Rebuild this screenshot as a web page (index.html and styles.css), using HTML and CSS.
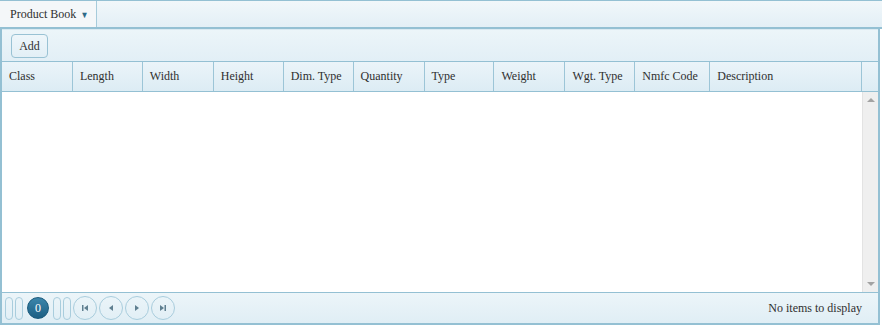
FILE: index.html
```html
<!DOCTYPE html>
<html lang="en">
<head>
    <meta charset="UTF-8">
    <title>Product Book</title>
    <link rel="stylesheet" href="styles.css">
</head>
<body>
    <div class="tabstrip">
        <div class="tab">Product Book <span class="caret">&#9660;</span></div>
    </div>
    <div class="grid">
        <div class="toolbar">
            <button class="add-btn">Add</button>
        </div>
        <div class="grid-header">
            <div class="col" style="width:71px">Class</div>
            <div class="col" style="width:70px">Length</div>
            <div class="col" style="width:71px">Width</div>
            <div class="col" style="width:70px">Height</div>
            <div class="col" style="width:70px">Dim. Type</div>
            <div class="col" style="width:71px">Quantity</div>
            <div class="col" style="width:70px">Type</div>
            <div class="col" style="width:71px">Weight</div>
            <div class="col" style="width:70px">Wgt. Type</div>
            <div class="col" style="width:75px">Nmfc Code</div>
            <div class="col" style="width:152px">Description</div>
            <div class="col scroll-head"></div>
        </div>
        <div class="grid-body">
            <div class="rows"></div>
            <div class="scrollbar">
                <span class="arrow up"></span>
                <span class="arrow down"></span>
            </div>
        </div>
        <div class="pager">
            <div class="pager-nav">
                <span class="pill"></span>
                <span class="pill"></span>
                <span class="page current">0</span>
                <span class="pill"></span>
                <span class="pill"></span>
                <span class="page-btn">
                    <svg width="10" height="10" viewBox="0 0 10 10"><rect x="2" y="2" width="1.5" height="6" fill="#5f7f90"/><polygon points="8,2 8,8 4,5" fill="#5f7f90"/></svg>
                </span>
                <span class="page-btn">
                    <svg width="10" height="10" viewBox="0 0 10 10"><polygon points="7,2 7,8 3,5" fill="#5f7f90"/></svg>
                </span>
                <span class="page-btn">
                    <svg width="10" height="10" viewBox="0 0 10 10"><polygon points="3,2 3,8 7,5" fill="#5f7f90"/></svg>
                </span>
                <span class="page-btn">
                    <svg width="10" height="10" viewBox="0 0 10 10"><polygon points="2,2 2,8 6,5" fill="#5f7f90"/><rect x="6.5" y="2" width="1.5" height="6" fill="#5f7f90"/></svg>
                </span>
            </div>
            <div class="pager-info">No items to display</div>
        </div>
    </div>
</body>
</html>
```

FILE: styles.css
```css
body {
    margin: 0;
    padding: 0;
    font-family: "Liberation Serif", "Times New Roman", serif;
    font-size: 12px;
    color: #2f2f2f;
    background: #ffffff;
    width: 882px;
    height: 325px;
    overflow: hidden;
}
.tabstrip {
    display: flex;
    height: 26px;
    border-top: 1px solid #94c0d3;
    border-bottom: 2px solid #94c0d3;
    background: linear-gradient(#f1f7fa, #e3eff6);
}
.tab {
    display: flex;
    align-items: center;
    padding: 0 7px 0 10px;
    background: #f4f7f9;
    border-right: 1px solid #a6cbdb;
}
.caret {
    font-size: 9px;
    color: #2d6a87;
    margin-left: 4px;
    margin-top: 2px;
    transform: scaleX(0.9);
}
.grid {
    width: 876px;
    border-left: 2px solid #94c0d3;
    border-right: 2px solid #94c0d3;
    border-bottom: 2px solid #94c0d3;
    height: 294px;
    display: flex;
    flex-direction: column;
}
.toolbar {
    height: 31px;
    display: flex;
    align-items: center;
    padding-left: 9px;
    background: linear-gradient(#ecf5f9, #e2eff6);
    border-top: 1px solid #d9e9f1;
}
.add-btn {
    font-family: inherit;
    font-size: 12px;
    color: #2f2f2f;
    width: 37px;
    height: 24px;
    padding: 0;
    border: 1px solid #99c2d4;
    border-radius: 4px;
    background: linear-gradient(#eef6fa, #e2eff6);
    margin-top: 1px;
}
.grid-header {
    display: flex;
    height: 29px;
    border-top: 1px solid #94c0d3;
    border-bottom: 1px solid #94c0d3;
    background: linear-gradient(#ebf4f9, #dcecf4);
}
.col {
    box-sizing: border-box;
    padding-left: 7px;
    line-height: 29px;
    border-right: 1px solid #9cc5d7;
    white-space: nowrap;
}
.scroll-head {
    width: 16px;
    padding: 0;
    border-right: none;
}
.grid-body {
    display: flex;
    height: 200px;
    background: #ffffff;
}
.rows {
    flex: 1;
}
.scrollbar {
    width: 15px;
    background: #efefef;
    border-left: 1px solid #e3e3e3;
    position: relative;
}
.arrow {
    position: absolute;
    left: 4px;
    width: 0;
    height: 0;
    border-left: 4px solid transparent;
    border-right: 4px solid transparent;
}
.arrow.up {
    top: 6px;
    border-bottom: 4px solid #a3a3a3;
}
.arrow.down {
    bottom: 6px;
    border-top: 4px solid #a3a3a3;
}
.pager {
    flex: 1;
    display: flex;
    align-items: center;
    justify-content: space-between;
    border-top: 1px solid #94c0d3;
    background: linear-gradient(#ecf5f9, #e0eef5);
    padding: 0 16px 0 3px;
}
.pager-nav {
    display: flex;
    align-items: center;
    gap: 2px;
}
.pill {
    box-sizing: border-box;
    width: 8px;
    height: 23px;
    border: 1px solid #a9cddd;
    border-radius: 4px;
}
.page {
    box-sizing: border-box;
    width: 22px;
    height: 22px;
    border-radius: 50%;
    margin: 0 2px;
    display: flex;
    align-items: center;
    justify-content: center;
    color: #ffffff;
    background: linear-gradient(#3c86ab, #1d5f83);
    border: 1px solid #1a5a7c;
}
.page-btn {
    box-sizing: border-box;
    width: 24px;
    height: 24px;
    border-radius: 50%;
    border: 1px solid #a9cddd;
    display: flex;
    align-items: center;
    justify-content: center;
}
.pager-info {
    color: #2f2f2f;
}
```
